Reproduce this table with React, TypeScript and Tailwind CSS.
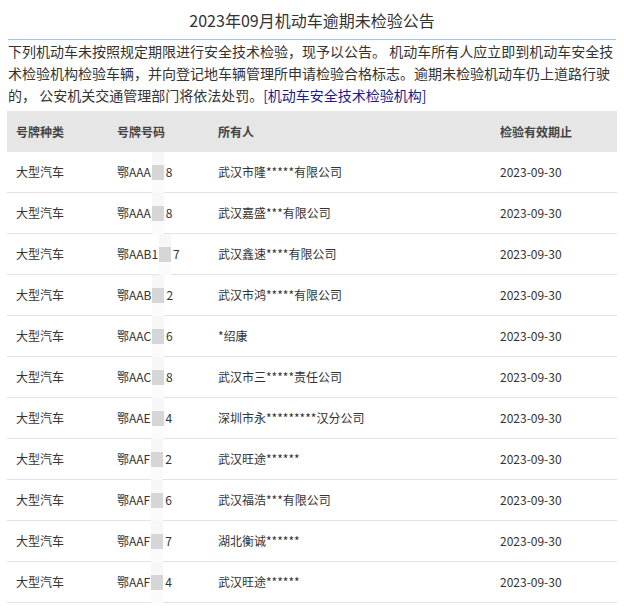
import React from "react";

const rows = [
  { type: "大型汽车", pre: "鄂AAA", post: "8", owner: "武汉市隆*****有限公司", date: "2023-09-30" },
  { type: "大型汽车", pre: "鄂AAA", post: "8", owner: "武汉嘉盛***有限公司", date: "2023-09-30" },
  { type: "大型汽车", pre: "鄂AAB1", post: "7", owner: "武汉鑫速****有限公司", date: "2023-09-30" },
  { type: "大型汽车", pre: "鄂AAB", post: "2", owner: "武汉市鸿*****有限公司", date: "2023-09-30" },
  { type: "大型汽车", pre: "鄂AAC", post: "6", owner: "*绍康", date: "2023-09-30" },
  { type: "大型汽车", pre: "鄂AAC", post: "8", owner: "武汉市三*****责任公司", date: "2023-09-30" },
  { type: "大型汽车", pre: "鄂AAE", post: "4", owner: "深圳市永*********汉分公司", date: "2023-09-30" },
  { type: "大型汽车", pre: "鄂AAF", post: "2", owner: "武汉旺途******", date: "2023-09-30" },
  { type: "大型汽车", pre: "鄂AAF", post: "6", owner: "武汉福浩***有限公司", date: "2023-09-30" },
  { type: "大型汽车", pre: "鄂AAF", post: "7", owner: "湖北衡诚******", date: "2023-09-30" },
  { type: "大型汽车", pre: "鄂AAF", post: "4", owner: "武汉旺途******", date: "2023-09-30" },
];

const App = () => {
  return (
    <div
      className="w-[624px] min-h-[609px] bg-white text-[#333] overflow-hidden"
      style={{ fontFamily: '"Noto Sans CJK SC", "Noto Sans", sans-serif' }}
    >
      {/* Title */}
      <div className="h-[39px] flex items-center justify-center text-[16px] text-[#333]">
        2023年09月机动车逾期未检验公告
      </div>
      <div className="mx-[8px] border-t border-[#a6c4e8]" />

      <div className="px-[8px]">
        <p className="text-[14px] leading-[22px] mb-[5px]">
          下列机动车未按照规定期限进行安全技术检验，现予以公告。 机动车所有人应立即到机动车安全技术检验机构检验车辆，并向登记地车辆管理所申请检验合格标志。逾期未检验机动车仍上道路行驶的， 公安机关交通管理部门将依法处罚。
          <a className="text-[#1a1a8c]">[机动车安全技术检验机构]</a>
        </p>

        {/* Table */}
        <div className="w-[610px] -ml-[1px] text-[12px]">
          <div className="grid grid-cols-[101px_101px_282px_126px] h-[41px] items-center bg-[#e6e6e6] font-bold text-[#444]">
            <div className="pl-[9px]">号牌种类</div>
            <div className="pl-[9px]">号牌号码</div>
            <div className="pl-[9px]">所有人</div>
            <div className="pl-[9px]">检验有效期止</div>
          </div>
          {rows.map((r, i) => (
            <div
              key={i}
              className="grid grid-cols-[101px_101px_282px_126px] h-[41px] items-center border-b border-[#e3e3e3]"
            >
              <div className="pl-[9px]">{r.type}</div>
              <div className="pl-[9px] flex items-center">
                <span className="whitespace-nowrap">{r.pre}</span>
                {/* blurred digits */}
                <span className="relative inline-block w-[12px] h-[15px] ml-[1px] mr-[2px] bg-[#d6d6d6]">
                  <span className="absolute left-0 right-0 top-[-13px] h-[13px] bg-[#f7f7f7]" />
                  <span className="absolute left-0 right-0 bottom-[-14px] h-[14px] bg-[#fbfbfb]" />
                </span>
                <span>{r.post}</span>
              </div>
              <div className="pl-[9px]">{r.owner}</div>
              <div className="pl-[9px]">{r.date}</div>
            </div>
          ))}
        </div>
      </div>
    </div>
  );
};

export default App;
